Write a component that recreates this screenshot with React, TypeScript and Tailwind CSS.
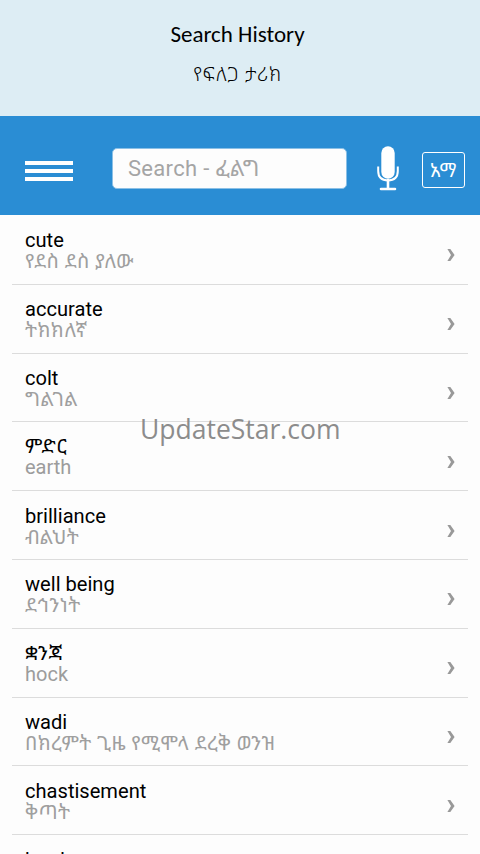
const history = [
  { word: 'cute', meaning: 'የደስ ደስ ያለው' },
  { word: 'accurate', meaning: 'ትክክለኛ' },
  { word: 'colt', meaning: 'ግልገል' },
  { word: 'ምድር', meaning: 'earth', amharic: true },
  { word: 'brilliance', meaning: 'ብልህት' },
  { word: 'well being', meaning: 'ደኅንነት' },
  { word: 'ቋንጃ', meaning: 'hock', amharic: true },
  { word: 'wadi', meaning: 'በክረምት ጊዜ የሚሞላ ደረቅ ወንዝ' },
  { word: 'chastisement', meaning: 'ቅጣት' },
  { word: 'hard', meaning: 'ከባድ' },
]

function Chevron() {
  return (
    <svg className="w-[8px] h-[14px] mr-[6px] mt-[10px]" viewBox="0 0 8 14" fill="#999">
      <path d="M0.4 1H3.3L7.6 7L3.3 13H0.4L4 7Z" />
    </svg>
  )
}

export default function App() {
  return (
    <div className="relative w-[480px] h-[854px] overflow-hidden bg-[#fdfdfd] text-black font-['Roboto','Noto_Sans_Ethiopic','Noto_Sans',sans-serif]">
      <header className="flex flex-col items-center h-[116px] pt-[20px] pr-[5px] bg-[#ddedf4]">
        <h1 className="text-[23px] leading-[28px] font-['Carlito','Open_Sans',sans-serif]">Search History</h1>
        <p className="mt-[13px] text-[19.5px] leading-[28px] tracking-[0.7px] font-light">የፍለጋ ታሪክ</p>
      </header>

      <div className="flex items-center h-[99px] pl-[25px] pr-[14px] bg-[#2a8dd4]">
        <button className="flex flex-col gap-[4px] w-[48px] mt-[11px]">
          <span className="w-full h-[4px] bg-white" />
          <span className="w-full h-[4px] bg-white" />
          <span className="w-full h-[4px] bg-white" />
        </button>
        <div className="flex items-center w-[235px] h-[41px] ml-[39px] mt-[6px] pl-[15px] rounded-[5px] bg-[#fdfdfd] border border-[#8bc0e6] text-[22px] tracking-[0.3px] text-[#a5a5a5] whitespace-nowrap">
          Search - ፈልግ
        </div>
        <svg className="w-[22px] h-[45px] ml-[30px] mt-[6px]" viewBox="0 0 22 45" fill="none" stroke="white">
          <rect x="4.3" y="0.2" width="13.4" height="32.5" rx="6.7" fill="white" stroke="none" />
          <path d="M1.2 20.5V25Q1.2 34.4 11 34.4T20.8 25V20.5" strokeWidth="2" />
          <path d="M11 34V43M4 43H18" strokeWidth="2.6" strokeLinecap="round" />
        </svg>
        <button className="flex items-center justify-center w-[43px] h-[36px] ml-[23px] mt-[9px] pt-[2px] rounded-[3px] border border-white text-white text-[19px] tracking-[0.6px]">
          አማ
        </button>
      </div>

      <ul className="px-3 pt-px">
        {history.map(({ word, meaning, amharic }) => (
          <li key={word} className="flex items-center justify-between h-[68.8px] pl-[13px] pr-[7px] pt-[12px] pb-[11px] border-b border-[#dcdcdc]">
            <div className="whitespace-nowrap">
              <div className={amharic ? 'text-[20px] leading-[22px] tracking-[0.8px]' : 'text-[20.1px] leading-[22px]'}>{word}</div>
              <div className={amharic ? 'text-[20px] leading-[21px] text-[#9c9c9c]' : 'text-[20px] leading-[20px] tracking-[0.4px] text-[#9f9f9f]'}>
                {meaning}
              </div>
            </div>
            <Chevron />
          </li>
        ))}
      </ul>

      <div className="absolute left-[140px] top-[410px] text-[26.5px] leading-[38px] text-[#8c8c8c] font-['Open_Sans',sans-serif]">
        UpdateStar.com
      </div>
    </div>
  )
}
